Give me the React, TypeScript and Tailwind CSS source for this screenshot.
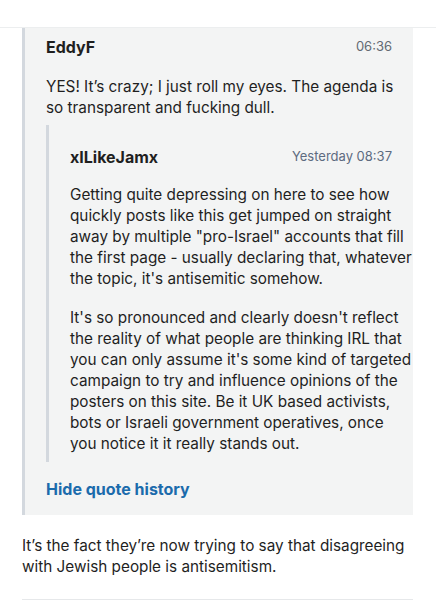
const L = ({ children }: { children: React.ReactNode }) => (
  <span className="block whitespace-nowrap">{children}</span>
);

export default function App() {
  return (
    <div className="w-[436px] h-[600px] bg-white overflow-hidden text-[#1f1f1f]" style={{ fontFamily: 'Inter, "Noto Sans", sans-serif' }}>
      <div className="h-[28px] border-b border-[#eceeef]" />
      <div className="pl-[22px] pr-[23px]">
        <div className="border-l-[3px] border-[#d3d8de] bg-[#f3f4f4] pl-[21px] pr-[21px] pt-[8px] pb-[15px]">
          <div className="flex items-center justify-between h-[22px]">
            <span className="text-[16px] font-bold">EddyF</span>
            <span className="text-[13px] text-[#626a73]">06:36</span>
          </div>
          <p className="mt-[18px] text-[15.3px] leading-[21px]">
            <L>YES! It’s crazy; I just roll my eyes. The agenda is</L>
            <L>so transparent and fucking dull.</L>
          </p>
          <div className="mt-[7px] border-l-[3px] border-[#d3d8de] pl-[21px] pt-[21px] pb-[8px]">
            <div className="flex items-center justify-between h-[22px]">
              <span className="text-[16px] font-bold">xILikeJamx</span>
              <span className="text-[13px] text-[#5d6b80]">Yesterday 08:37</span>
            </div>
            <p className="mt-[16px] text-[15.3px] leading-[21px]">
              <L>Getting quite depressing on here to see how</L>
              <L>quickly posts like this get jumped on straight</L>
              <L>away by multiple "pro-Israel" accounts that fill</L>
              <L>the first page - usually declaring that, whatever</L>
              <L>the topic, it's antisemitic somehow.</L>
            </p>
            <p className="mt-[18px] text-[15.3px] leading-[21px]">
              <L>It's so pronounced and clearly doesn't reflect</L>
              <L>the reality of what people are thinking IRL that</L>
              <L>you can only assume it's some kind of targeted</L>
              <L>campaign to try and influence opinions of the</L>
              <L>posters on this site. Be it UK based activists,</L>
              <L>bots or Israeli government operatives, once</L>
              <L>you notice it it really stands out.</L>
            </p>
          </div>
          <div className="mt-[16px] h-[22px] flex items-center text-[16px] font-bold text-[#1b6bac]">
            Hide quote history
          </div>
        </div>
        <p className="mt-[20px] text-[15.3px] leading-[21px]">
          <L>It’s the fact they’re now trying to say that disagreeing</L>
          <L>with Jewish people is antisemitism.</L>
        </p>
        <div className="mt-[22px] border-t border-[#e6e8ea]" />
      </div>
    </div>
  );
}
